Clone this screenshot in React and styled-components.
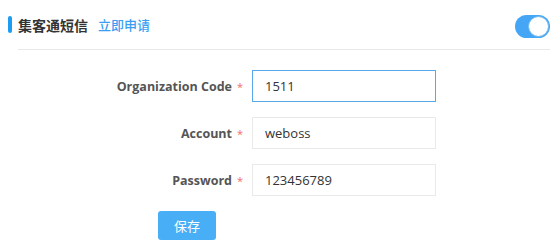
import React from "react";
import styled, { createGlobalStyle } from "styled-components";

const Global = createGlobalStyle`
  html, body { margin: 0; padding: 0; background: #fff; }
  body { font-family: "Open Sans", "Noto Sans CJK SC", sans-serif; color: #333; }
`;

const Page = styled.div`
  width: 555px;
  height: 245px;
  overflow: hidden;
`;

const Header = styled.div`
  display: flex;
  align-items: center;
  height: 49px;
  padding: 0 5px 0 8px;
`;

const Bar = styled.span`
  width: 4px;
  height: 17px;
  border-radius: 2px;
  background: #1c9cf2;
  margin-right: 6px;
`;

const Title = styled.span`
  font-family: "Noto Sans CJK SC", sans-serif;
  font-size: 14px;
  font-weight: 700;
  color: #333;
`;

const Link = styled.a`
  font-family: "Noto Sans CJK SC", sans-serif;
  font-size: 13px;
  font-weight: 500;
  color: #3a9ff2;
  margin-left: 10px;
  text-decoration: none;
`;

const Spacer = styled.div`
  flex: 1;
`;

const Toggle = styled.div`
  width: 35px;
  height: 23px;
  border-radius: 12px;
  background: #45a6f5;
  display: flex;
  align-items: center;
  justify-content: flex-end;
  box-sizing: border-box;
  padding-right: 1px;
  margin-top: 3px;
`;

const Knob = styled.div`
  width: 21px;
  height: 21px;
  border-radius: 50%;
  background: #fff;
  box-sizing: border-box;
  border: 1px solid #6cb7f0;
`;

const Divider = styled.div`
  height: 1px;
  background: #e8e8e8;
  margin: 0 5px 0 18px;
`;

const Form = styled.div`
  display: flex;
  flex-direction: column;
  gap: 15px;
  padding-top: 20px;
`;

const Row = styled.div`
  display: flex;
  align-items: center;
  height: 32px;
`;

const Label = styled.label`
  width: 232px;
  text-align: right;
  font-size: 12.5px;
  font-weight: 700;
  color: #555;
`;

const Star = styled.span`
  width: 20px;
  padding-left: 5px;
  box-sizing: border-box;
  color: #f06b6b;
  font-size: 11px;
  font-weight: 400;
`;

const Input = styled.div`
  width: 184px;
  height: 32px;
  box-sizing: border-box;
  border: 1px solid ${(p) => (p.$focused ? "#5aa8ea" : "#e9e9e9")};
  padding: 0 12px;
  display: flex;
  align-items: center;
  font-size: 13px;
  color: #333;
`;

const Actions = styled.div`
  padding-left: 158px;
`;

const Button = styled.button`
  width: 58px;
  height: 29px;
  border: none;
  border-radius: 3px;
  background: #48aef6;
  color: #fff;
  font-family: "Noto Sans CJK SC", sans-serif;
  font-size: 13px;
  padding: 0;
`;

const fields = [
  { label: "Organization Code", value: "1511", focused: true },
  { label: "Account", value: "weboss" },
  { label: "Password", value: "123456789" },
];

export default function App() {
  return (
    <Page>
      <Global />
      <Header>
        <Bar />
        <Title>集客通短信</Title>
        <Link>立即申请</Link>
        <Spacer />
        <Toggle>
          <Knob />
        </Toggle>
      </Header>
      <Divider />
      <Form>
        {fields.map((f) => (
          <Row key={f.label}>
            <Label>{f.label}</Label>
            <Star>*</Star>
            <Input $focused={f.focused}>{f.value}</Input>
          </Row>
        ))}
        <Actions>
          <Button>保存</Button>
        </Actions>
      </Form>
    </Page>
  );
}
